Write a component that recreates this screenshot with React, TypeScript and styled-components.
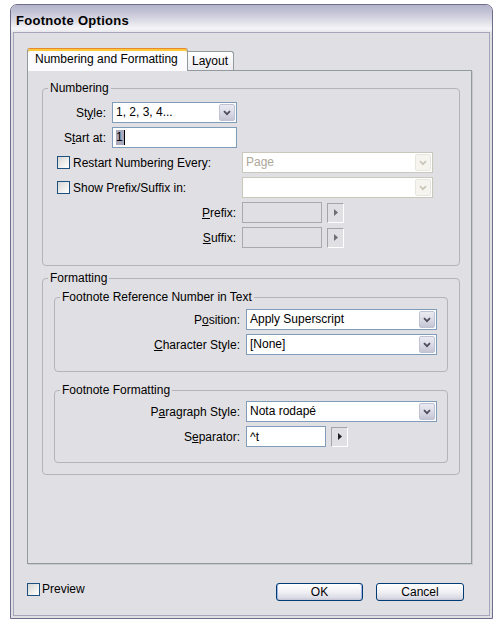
import React from 'react';
import styled, { createGlobalStyle } from 'styled-components';

const GlobalStyle = createGlobalStyle`
  html, body {
    margin: 0;
    padding: 0;
    background: #fff;
  }
  body {
    font-family: "Liberation Sans", Arial, sans-serif;
    font-size: 12px;
    color: #000;
  }
`;

const Dialog = styled.div`
  box-sizing: border-box;
  width: 483px;
  height: 615px;
  margin: 4px 0 0 10px;
  border: 1px solid #6d6d8e;
  border-radius: 7px 7px 0 0;
  background: #e0dfe3;
  display: flex;
  flex-direction: column;
  overflow: hidden;
`;

const TitleBar = styled.div`
  box-sizing: border-box;
  height: 27px;
  flex-shrink: 0;
  display: flex;
  align-items: center;
  padding: 3px 0 0 5px;
  border-radius: 6px 6px 0 0;
  background: linear-gradient(
    to bottom,
    #b3b3cb 0%,
    #c6c6d8 30%,
    #e2e2ea 65%,
    #f6f6f9 88%,
    #e6e6ec 100%
  );
`;

const Title = styled.span`
  font-weight: bold;
  font-size: 13px;
  letter-spacing: 0.3px;
`;

const Body = styled.div`
  flex: 1;
  margin: 0 2px 2px;
  border: 1px solid #a6a6b8;
  padding: 15px 17px 0 13px;
  display: flex;
  flex-direction: column;
`;

const TabStrip = styled.div`
  display: flex;
  align-items: flex-end;
  height: 23px;
  margin-bottom: -1px;
  position: relative;
  z-index: 1;
`;

const Tab = styled.div<{ $active?: boolean; $width: number }>`
  box-sizing: border-box;
  width: ${p => p.$width}px;
  border: 1px solid #919b9c;
  border-bottom: none;
  border-radius: 3px 3px 0 0;
  white-space: nowrap;
  ${p =>
    p.$active
      ? `
    height: 23px;
    line-height: 21px;
    padding-left: 7px;
    border-top-color: #e68b2c;
    background: #fcfcfe;
    box-shadow: inset 0 2px 0 #ffc73c;
  `
      : `
    height: 19px;
    line-height: 19px;
    margin-bottom: 1px;
    padding-left: 4px;
    border-left: none;
    border-radius: 0 3px 0 0;
    background: linear-gradient(to bottom, #ffffff, #ececf1);
  `}
`;

const Panel = styled.div`
  box-sizing: border-box;
  height: 494px;
  border: 1px solid #919b9c;
  box-shadow: 1px 1px 0 #c8c8d0;
  padding: 17px 11px 0 14px;
  display: flex;
  flex-direction: column;
`;

const Group = styled.div<{ $pad: string; $mt?: number }>`
  position: relative;
  border: 1px solid #b3b3ba;
  border-radius: 4px;
  padding: ${p => p.$pad};
  margin-top: ${p => p.$mt ?? 0}px;
  display: flex;
  flex-direction: column;
  gap: 4px;
`;

const Legend = styled.span`
  position: absolute;
  top: -8px;
  left: 5px;
  line-height: 14px;
  padding: 0 2px;
  background: #e0dfe3;
`;

const Row = styled.div<{ $indent?: number; $gap?: number }>`
  display: flex;
  align-items: center;
  height: 21px;
  gap: ${p => p.$gap ?? 6}px;
  padding-left: ${p => p.$indent ?? 0}px;
`;

const Label = styled.span<{ $width: number }>`
  width: ${p => p.$width}px;
  flex-shrink: 0;
  text-align: right;
  white-space: nowrap;
`;

const Key = styled.span`
  text-decoration: underline;
`;

const CheckLabel = styled.label<{ $width?: number; $gap?: number }>`
  display: flex;
  align-items: center;
  gap: ${p => p.$gap ?? 3}px;
  width: ${p => (p.$width ? `${p.$width}px` : 'auto')};
  flex-shrink: 0;
  white-space: nowrap;
`;

const PreviewCheck = styled(CheckLabel)`
  align-self: flex-start;
  line-height: 13px;
`;

const CheckBox = styled.span`
  box-sizing: border-box;
  width: 13px;
  height: 13px;
  flex-shrink: 0;
  border: 1px solid #1c5180;
  background: linear-gradient(135deg, #d6d6d4 0%, #f4f4f2 70%, #ffffff 100%);
`;

const ComboBox = styled.div<{ $width: number; $disabled?: boolean }>`
  box-sizing: border-box;
  width: ${p => p.$width}px;
  height: 21px;
  flex-shrink: 0;
  display: flex;
  border: 1px solid ${p => (p.$disabled ? '#cac8bb' : '#7f9db9')};
  background: #fff;
`;

const ComboText = styled.span<{ $disabled?: boolean }>`
  flex: 1;
  padding-left: 3px;
  line-height: 19px;
  white-space: nowrap;
  color: ${p => (p.$disabled ? '#aca899' : '#000')};
`;

const ComboButton = styled.span<{ $disabled?: boolean }>`
  box-sizing: border-box;
  width: 16px;
  margin: 1px;
  display: flex;
  align-items: center;
  justify-content: center;
  border-radius: 2px;
  border: 1px solid ${p => (p.$disabled ? '#e8e7df' : '#bfc2d2')};
  background: ${p =>
    p.$disabled
      ? '#f5f4ef'
      : 'linear-gradient(to bottom, #eaebf1 0%, #d6d7e2 60%, #c4c5d3 100%)'};
`;

const TextBox = styled.div<{ $width: number; $disabled?: boolean }>`
  box-sizing: border-box;
  width: ${p => p.$width}px;
  height: 21px;
  flex-shrink: 0;
  display: flex;
  align-items: center;
  padding-left: 3px;
  border: 1px solid ${p => (p.$disabled ? '#a9a9ae' : '#7f9db9')};
  background: ${p => (p.$disabled ? 'transparent' : '#fff')};
`;

const Selected = styled.span`
  background: #a9abbd;
  line-height: 15px;
  padding: 0 1px 0 0;
  border-right: 1px solid #000;
`;

const ArrowButton = styled.span`
  box-sizing: border-box;
  width: 17px;
  height: 20px;
  flex-shrink: 0;
  margin-left: -1px;
  display: flex;
  align-items: center;
  justify-content: center;
  border: 1px solid;
  border-color: #a4a4ac #ffffff #ffffff #a4a4ac;
`;

const Footer = styled.div`
  display: flex;
  align-items: center;
  height: 18px;
  margin-top: 19px;
  padding-right: 8px;
`;

const Buttons = styled.div`
  margin-left: auto;
  display: flex;
  gap: 13px;
`;

const PushButton = styled.button<{ $width: number; $default?: boolean }>`
  box-sizing: border-box;
  width: ${p => p.$width}px;
  height: 18px;
  padding: 0;
  font: inherit;
  color: #000;
  border: 1px solid #003c74;
  border-radius: 3px;
  background: linear-gradient(to bottom, #ffffff 0%, #f2f2f6 45%, #dcdce6 85%, #c6c6d4 100%);
  box-shadow: ${p => (p.$default ? 'inset 1px 0 0 #9db4e4, inset -1px 0 0 #9db4e4' : 'none')};
  line-height: 16px;
`;

const Chevron = ({ disabled }: { disabled?: boolean }) => (
  <svg width="8" height="6" viewBox="0 0 8 6">
    <path
      d="M1 1.2 L4 4.2 L7 1.2"
      fill="none"
      stroke={disabled ? '#c9c7ba' : '#4d4d5e'}
      strokeWidth="1.8"
    />
  </svg>
);

const Play = ({ disabled }: { disabled?: boolean }) => (
  <svg width="4" height="7" viewBox="0 0 4 7">
    <path d="M0 0 L4 3.5 L0 7 Z" fill={disabled ? '#6e6e74' : '#202024'} />
  </svg>
);

const Combo = ({ width, value, disabled }: { width: number; value: string; disabled?: boolean }) => (
  <ComboBox $width={width} $disabled={disabled}>
    <ComboText $disabled={disabled}>{value}</ComboText>
    <ComboButton $disabled={disabled}>
      <Chevron disabled={disabled} />
    </ComboButton>
  </ComboBox>
);

export default function App() {
  return (
    <>
      <GlobalStyle />
      <Dialog>
        <TitleBar>
          <Title>Footnote Options</Title>
        </TitleBar>
        <Body>
          <TabStrip>
            <Tab $active $width={161}>Numbering and Formatting</Tab>
            <Tab $width={46}>Layout</Tab>
          </TabStrip>
          <Panel>
            <Group $pad="13px 0 17px 0">
              <Legend>Numbering</Legend>
              <Row>
                <Label $width={63}>St<Key>y</Key>le:</Label>
                <Combo width={125} value="1, 2, 3, 4..." />
              </Row>
              <Row>
                <Label $width={63}>S<Key>t</Key>art at:</Label>
                <TextBox $width={125}>
                  <Selected>1</Selected>
                </TextBox>
              </Row>
              <Row $indent={14} $gap={0}>
                <CheckLabel $width={185}>
                  <CheckBox />
                  Restart Numbering Every:
                </CheckLabel>
                <Combo width={191} value="Page" disabled />
              </Row>
              <Row $indent={14} $gap={0}>
                <CheckLabel $width={185}>
                  <CheckBox />
                  Show Prefix/Suffix in:
                </CheckLabel>
                <Combo width={191} value="" disabled />
              </Row>
              <Row>
                <Label $width={193}><Key>P</Key>refix:</Label>
                <TextBox $width={80} $disabled />
                <ArrowButton>
                  <Play disabled />
                </ArrowButton>
              </Row>
              <Row>
                <Label $width={193}><Key>S</Key>uffix:</Label>
                <TextBox $width={80} $disabled />
                <ArrowButton>
                  <Play disabled />
                </ArrowButton>
              </Row>
            </Group>

            <Group $pad="18px 11px 11px 11px" $mt={12}>
              <Legend>Formatting</Legend>
              <Group $pad="11px 0 16px 0">
                <Legend>Footnote Reference Number in Text</Legend>
                <Row>
                  <Label $width={185}>P<Key>o</Key>sition:</Label>
                  <Combo width={191} value="Apply Superscript" />
                </Row>
                <Row>
                  <Label $width={185}><Key>C</Key>haracter Style:</Label>
                  <Combo width={191} value="[None]" />
                </Row>
              </Group>
              <Group $pad="10px 0 15px 0" $mt={14}>
                <Legend>Footnote Formatting</Legend>
                <Row>
                  <Label $width={185}>P<Key>a</Key>ragraph Style:</Label>
                  <Combo width={191} value="Nota rodapé" />
                </Row>
                <Row>
                  <Label $width={185}>S<Key>e</Key>parator:</Label>
                  <TextBox $width={80}>^t</TextBox>
                  <ArrowButton>
                    <Play />
                  </ArrowButton>
                </Row>
              </Group>
            </Group>
          </Panel>
          <Footer>
            <PreviewCheck $gap={2}>
              <CheckBox />
              Preview
            </PreviewCheck>
            <Buttons>
              <PushButton $width={87} $default>OK</PushButton>
              <PushButton $width={88}>Cancel</PushButton>
            </Buttons>
          </Footer>
        </Body>
      </Dialog>
    </>
  );
}
